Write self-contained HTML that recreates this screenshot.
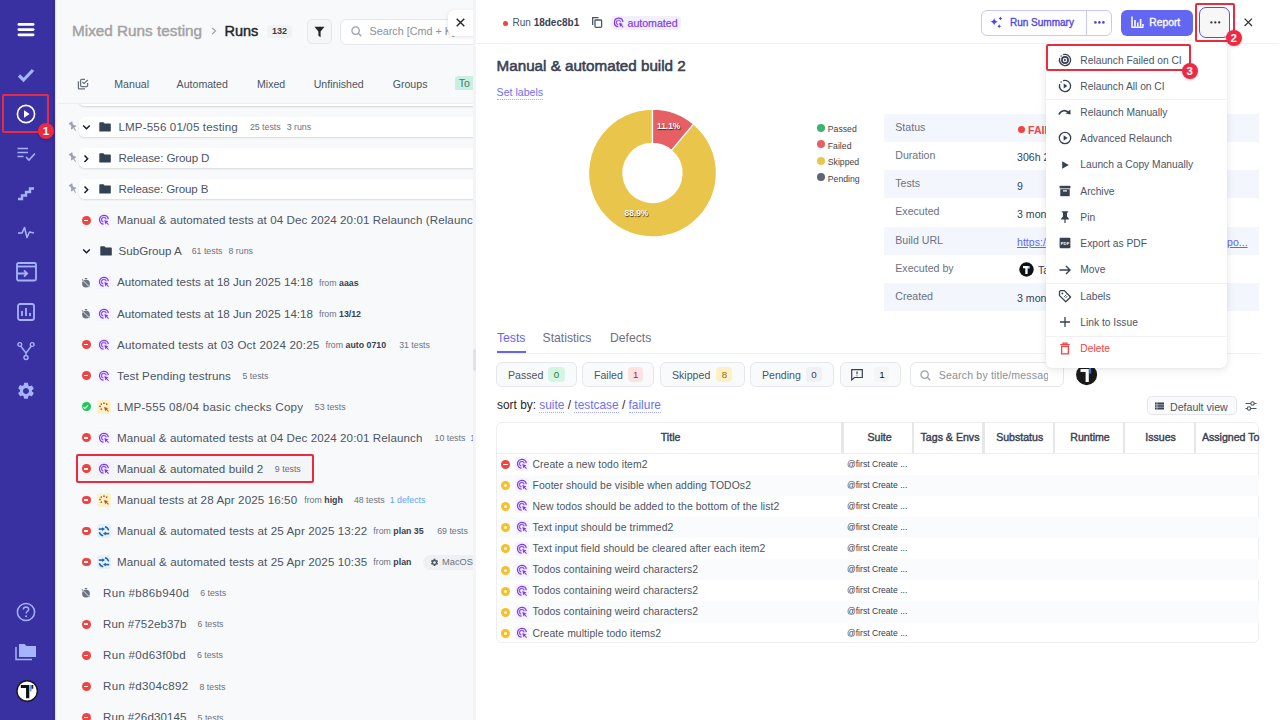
<!DOCTYPE html><html><head><meta charset="utf-8"><title>Runs</title><style>
*{box-sizing:border-box;margin:0;padding:0}
html,body{width:1280px;height:720px;overflow:hidden;background:#f8f9fb;font-family:"Liberation Sans",sans-serif;color:#4b5563;-webkit-font-smoothing:antialiased}
.a{position:absolute}
svg{display:block;overflow:visible}
#side{left:0;top:0;width:54.5px;height:720px;background:#3930a1}
#left{left:55px;top:0;width:418px;height:720px;background:#f8f9fb;overflow:hidden}
#sbar{left:473px;top:0;width:3px;height:720px;background:#f3f4f6}
#right{left:476px;top:0;width:804px;height:720px;background:#fff}
.redbox{position:absolute;border:2.5px solid #ec2a3f;border-radius:2px}
.badge{position:absolute;width:16px;height:16px;border-radius:50%;background:#ee2a42;color:#fff;font-weight:bold;font-size:11.5px;line-height:16.5px;text-align:center;box-shadow:0 1px 3px rgba(0,0,0,.18)}
.row{position:absolute;left:0;width:418px;height:20px;white-space:nowrap}
.card{position:absolute;left:23.7px;width:400px;height:20px;background:#fff;border-radius:5px;box-shadow:0 1px 2px rgba(0,0,0,.13)}
.rt{position:absolute;font-size:11.6px;color:#4b5563;top:3px;line-height:14px;white-space:nowrap}
.meta{font-size:8.8px;color:#6b7280;position:relative;top:-0.8px;letter-spacing:0}
.meta b{color:#374151}
.st{position:absolute;width:8.8px;height:8.8px;border-radius:50%;left:26.9px;top:5.6px}
.st.red{background:#ef4444}
.st.red:after{content:"";position:absolute;left:2.3px;top:3.65px;width:4.2px;height:1.5px;background:#fff}
.st.green{background:#22c55e}
.st.green:after{content:"";position:absolute;left:2.3px;top:1.6px;width:2.2px;height:4px;border:solid #fff;border-width:0 1.4px 1.4px 0;transform:rotate(45deg)}
.ti{position:absolute;left:42.2px;top:3px;width:14px;height:14px;border-radius:3px}
.ti.auto{background:#f6f3fe}
.ti.man{background:#fdf1c9}
.ti.mix{background:#e6f0fb}
.mi{position:absolute;left:0;width:181px;height:26px;white-space:nowrap}
.mt{position:absolute;left:34.5px;top:7px;font-size:10.6px;line-height:12px;color:#4b5563}
.mic{position:absolute;left:12px;top:6.5px;width:14px;height:14px}
.lbl{position:absolute;left:12px;font-size:10.6px;color:#6b7280;line-height:12px}
.val{position:absolute;left:133px;font-size:10.6px;color:#374151;line-height:12px}
.pill{position:absolute;top:362px;height:25px;border:1px solid #e5e7eb;border-radius:6px;background:#f9fafb}
.pt{position:absolute;top:6px;font-size:10.6px;line-height:12px;color:#4b5563}
.pb{position:absolute;top:4px;height:15px;border-radius:4px;font-size:9.8px;line-height:15.5px;text-align:center}
.th{position:absolute;top:431px;font-size:10.6px;color:#374151;-webkit-text-stroke:0.4px #374151;line-height:12px;white-space:nowrap}
.tr{position:absolute;left:497px;width:762px;height:21.14px}
.tt{position:absolute;left:35.5px;top:4px;font-size:10.4px;letter-spacing:0.08px;line-height:13px;color:#4b5563;white-space:nowrap}
.ts{position:absolute;left:350px;top:5px;font-size:8.6px;line-height:11px;color:#374151;white-space:nowrap}
</style></head><body>
<div id="side" class="a">
<div class="a" style="left:53px;top:0;width:1px;height:720px;background:#31279b"></div>
<svg class="a" style="left:17px;top:22px" width="18" height="15"><rect x="0.5" y="1" width="17" height="2.8" rx="1.4" fill="#fff"/><rect x="0.5" y="6.2" width="17" height="2.8" rx="1.4" fill="#fff"/><rect x="0.5" y="11.4" width="17" height="2.8" rx="1.4" fill="#fff"/></svg>
<svg class="a" style="left:17px;top:67px" width="18" height="16"><path d="M2 8.5 L6.5 13 L16 3" stroke="#a5b4fc" stroke-width="3.2" fill="none" stroke-linecap="butt" stroke-linejoin="miter"/></svg>
<svg class="a" style="left:16px;top:104px" width="20" height="20"><circle cx="10" cy="10" r="8.6" stroke="#fff" stroke-width="1.6" fill="none"/><path d="M8 6.3 L13.6 10 L8 13.7 Z" fill="#fff"/></svg>
<svg class="a" style="left:17px;top:147px" width="19" height="15"><path d="M0.5 1.5H11M0.5 5.5H11M0.5 9.5H6.5" stroke="#a5b4fc" stroke-width="1.6"/><path d="M9 10 L12 13 L18 6.5" stroke="#a5b4fc" stroke-width="1.6" fill="none"/></svg>
<svg class="a" style="left:17px;top:186px" width="18" height="15"><path d="M1 13 H5 V9.5 H9 V6 H13 V2.5 H17" stroke="#a5b4fc" stroke-width="2.4" fill="none"/></svg>
<svg class="a" style="left:17px;top:226px" width="18" height="13"><path d="M1 7 H5 L7.5 1.5 L10 11.5 L12.5 6 L17 7" stroke="#a5b4fc" stroke-width="1.6" fill="none" stroke-linejoin="round"/></svg>
<svg class="a" style="left:16px;top:262px" width="21" height="20"><rect x="1" y="1" width="19" height="17.5" rx="1.5" stroke="#a5b4fc" stroke-width="1.8" fill="none"/><path d="M1 4.5H20" stroke="#a5b4fc" stroke-width="1.8"/><path d="M1 11.5 H11 M8 8.3 L11.2 11.5 L8 14.7" stroke="#a5b4fc" stroke-width="1.8" fill="none"/></svg>
<svg class="a" style="left:17px;top:303px" width="18" height="18"><rect x="1" y="1" width="16" height="16" rx="2" stroke="#a5b4fc" stroke-width="1.8" fill="none"/><path d="M5 13V8 M9 13V5 M13 13V10" stroke="#a5b4fc" stroke-width="1.8"/></svg>
<svg class="a" style="left:17px;top:342px" width="18" height="19"><circle cx="2.8" cy="2.5" r="1.9" stroke="#a5b4fc" stroke-width="1.4" fill="none"/><circle cx="15.2" cy="2.5" r="1.9" stroke="#a5b4fc" stroke-width="1.4" fill="none"/><circle cx="9" cy="15.5" r="2" stroke="#a5b4fc" stroke-width="1.4" fill="none"/><path d="M3.8 4.2 L9 11 L14.2 4.2 M9 11 V13.5" stroke="#a5b4fc" stroke-width="1.4" fill="none"/></svg>
<svg class="a" style="left:16px;top:381px" width="20" height="20" viewBox="0 0 24 24"><path fill="#a5b4fc" d="M19.14 12.94c.04-.3.06-.61.06-.94s-.02-.64-.07-.94l2.03-1.58a.49.49 0 0 0 .12-.61l-1.92-3.32a.49.49 0 0 0-.59-.22l-2.39.96c-.5-.38-1.03-.7-1.62-.94l-.36-2.54A.48.48 0 0 0 13.92 2h-3.84c-.24 0-.43.17-.47.41l-.36 2.54c-.59.24-1.13.57-1.62.94l-2.39-.96a.48.48 0 0 0-.59.22L2.74 8.47c-.12.21-.08.47.12.61l2.03 1.58c-.05.3-.09.63-.09.94s.02.64.07.94l-2.03 1.58a.49.49 0 0 0-.12.61l1.92 3.32c.12.22.37.29.59.22l2.39-.96c.5.38 1.03.7 1.62.94l.36 2.54c.05.24.24.41.48.41h3.84c.24 0 .44-.17.47-.41l.36-2.54c.59-.24 1.13-.56 1.62-.94l2.39.96c.22.08.47 0 .59-.22l1.92-3.32c.12-.22.07-.47-.12-.61l-2.01-1.58zM12 15.6c-1.98 0-3.6-1.62-3.6-3.6s1.62-3.6 3.6-3.6 3.6 1.62 3.6 3.6-1.62 3.6-3.6 3.6z"/></svg>
<svg class="a" style="left:16px;top:602px" width="20" height="20"><circle cx="10" cy="10" r="8.6" stroke="#a5b4fc" stroke-width="1.5" fill="none"/><path d="M7.3 7.6 C7.3 5.9 8.5 5 10 5 C11.6 5 12.7 6 12.7 7.4 C12.7 9.2 10.2 9.4 10.2 11.4" stroke="#a5b4fc" stroke-width="1.5" fill="none"/><circle cx="10.1" cy="14.2" r="1" fill="#a5b4fc"/></svg>
<svg class="a" style="left:15px;top:642px" width="22" height="19"><path d="M1 5 V17.5 H17" stroke="#a5b4fc" stroke-width="1.5" fill="none"/><path d="M4 2 H9.5 L11.5 4 H21 V15 H4 Z" fill="#a5b4fc"/></svg>
<svg class="a" style="left:15.5px;top:680px" width="23" height="23"><circle cx="11.15" cy="11" r="10.2" fill="#fff" stroke="#1a1a1a" stroke-width="1.4"/><path d="M4.8 5 H13.3 V18.2 H10.05 V8 H4.8 Z" fill="#111"/><rect x="13.7" y="5" width="1.8" height="6.4" fill="#5b9cf5"/><rect x="15.5" y="5" width="1.8" height="3.8" fill="#222"/></svg>
</div>
<div id="left" class="a">
<div class="a" style="left:17px;top:21.8px;font-size:15.3px;color:#a3a3a3;-webkit-text-stroke:0.45px #a3a3a3;line-height:18px;white-space:nowrap">Mixed Runs testing</div>
<svg class="a" style="left:155.5px;top:27px" width="6" height="8"><path d="M1.2 1 L4.5 4 L1.2 7" stroke="#9ca3af" stroke-width="1.2" fill="none"/></svg>
<div class="a" style="left:169.5px;top:21.8px;font-size:14.5px;color:#262626;-webkit-text-stroke:0.45px #262626;line-height:18px">Runs</div>
<div class="a" style="left:212px;top:25px;width:25px;height:13px;border-radius:3px;background:#f1f2f4;font-size:9px;font-weight:bold;color:#404040;line-height:13px;text-align:center">132</div>
<div class="a" style="left:252px;top:18.5px;width:25px;height:25px;border:1px solid #e5e7eb;border-radius:5px;background:#f6f6f7"></div>
<svg class="a" style="left:259px;top:25.5px" width="11" height="12"><path d="M0.5 0.8 H10.5 L6.6 5.6 V11.2 L4.4 9.8 V5.6 Z" fill="#262626"/></svg>
<div class="a" style="left:285px;top:18.5px;width:150px;height:26px;border:1px solid #e5e7eb;border-radius:6px;background:#fff"></div>
<svg class="a" style="left:295.5px;top:25.5px" width="11" height="11"><circle cx="4.6" cy="4.6" r="3.7" stroke="#9ca3af" stroke-width="1.3" fill="none"/><path d="M7.3 7.3 L10.3 10.3" stroke="#9ca3af" stroke-width="1.3"/></svg>
<div class="a" style="left:314.5px;top:25px;font-size:10.8px;color:#8b9099;line-height:12px;white-space:nowrap">Search [Cmd + K]</div>
<div class="a" style="left:392.5px;top:10px;width:30px;height:26px;background:#fff;border-radius:6px;box-shadow:0 1px 4px rgba(0,0,0,.12)"></div>
<svg class="a" style="left:400.5px;top:18px" width="9" height="9"><path d="M0.7 0.7 L8.3 8.3 M8.3 0.7 L0.7 8.3" stroke="#262626" stroke-width="1.4"/></svg>
<svg class="a" style="left:22px;top:78px" width="12" height="12"><path d="M1.4 3.2 V10.3 Q1.4 10.9 2 10.9 H8" stroke="#6b7280" stroke-width="1.3" fill="none"/><path d="M8 1.4 H4.6 Q3.6 1.4 3.6 2.4 V7.6 Q3.6 8.6 4.6 8.6 H9.6 Q10.6 8.6 10.6 7.6 V5" stroke="#6b7280" stroke-width="1.3" fill="none"/><path d="M5.4 4.3 L7 5.5 L10.8 2" stroke="#6b7280" stroke-width="1.3" fill="none"/></svg>
<div class="a" style="left:59.3px;top:77.5px;font-size:10.6px;color:#4b5563;line-height:12px;white-space:nowrap">Manual</div>
<div class="a" style="left:121.6px;top:77.5px;font-size:10.6px;color:#4b5563;line-height:12px;white-space:nowrap">Automated</div>
<div class="a" style="left:202px;top:77.5px;font-size:10.6px;color:#4b5563;line-height:12px;white-space:nowrap">Mixed</div>
<div class="a" style="left:258.7px;top:77.5px;font-size:10.6px;color:#4b5563;line-height:12px;white-space:nowrap">Unfinished</div>
<div class="a" style="left:337.7px;top:77.5px;font-size:10.6px;color:#4b5563;line-height:12px;white-space:nowrap">Groups</div>
<div class="a" style="left:399.7px;top:76px;width:30px;height:15px;border-radius:3px;background:#c9efe0;font-size:10.6px;color:#3f7f6a;line-height:15px;padding-left:4px">To</div>
<div class="a" style="left:23.7px;top:96px;width:400px;height:10px;background:#fff;border-radius:0 0 5px 5px;box-shadow:0 1px 2px rgba(0,0,0,.15)"></div>
<div class="a" style="left:0;top:90px;width:418px;height:13px;background:#f8f9fb"></div>
<div class="a" style="left:0;top:103px;width:418px;height:1px;background:#eceef1"></div>
<div class="row" style="top:117.10px">
<div class="card"></div>
<svg class="a" style="left:12.5px;top:3.5px" width="10" height="11" viewBox="0 0 10 11"><g transform="rotate(-32 5 5.5)"><path d="M3 0.6 H7 V1.9 H6.3 V4.4 L7.9 6.2 V7.1 H2.1 V6.2 L3.7 4.4 V1.9 H3 Z" fill="#9ca3af"/><path d="M5 7 V10.4" stroke="#9ca3af" stroke-width="1"/></g></svg>
<svg class="a" style="left:27px;top:7px" width="9" height="7"><path d="M1.2 1.5 L4.5 4.7 L7.8 1.5" stroke="#111827" stroke-width="1.45" fill="none"/></svg>
<svg class="a" style="left:44.4px;top:5px" width="12" height="10"><path d="M0.3 1 Q0.3 0.3 1 0.3 H4.5 L5.6 1.5 H11.2 Q11.8 1.5 11.8 2.2 V8.9 Q11.8 9.5 11.1 9.5 H1 Q0.3 9.5 0.3 8.9 Z" fill="#334155"/></svg>
<div class="rt" style="left:63.5px;top:2.5px"><span style="letter-spacing:0.13px">LMP-556 01/05 testing</span><span class="meta" style="margin-left:12px">25 tests</span><span class="meta" style="margin-left:6px">3 runs</span></div>
</div>
<div class="row" style="top:148.17px">
<div class="card"></div>
<svg class="a" style="left:12.5px;top:3.5px" width="10" height="11" viewBox="0 0 10 11"><g transform="rotate(-32 5 5.5)"><path d="M3 0.6 H7 V1.9 H6.3 V4.4 L7.9 6.2 V7.1 H2.1 V6.2 L3.7 4.4 V1.9 H3 Z" fill="#9ca3af"/><path d="M5 7 V10.4" stroke="#9ca3af" stroke-width="1"/></g></svg>
<svg class="a" style="left:28px;top:5.5px" width="7" height="10"><path d="M1.5 1.5 L4.7 4.8 L1.5 8.1" stroke="#111827" stroke-width="1.45" fill="none"/></svg>
<svg class="a" style="left:44.4px;top:5px" width="12" height="10"><path d="M0.3 1 Q0.3 0.3 1 0.3 H4.5 L5.6 1.5 H11.2 Q11.8 1.5 11.8 2.2 V8.9 Q11.8 9.5 11.1 9.5 H1 Q0.3 9.5 0.3 8.9 Z" fill="#334155"/></svg>
<div class="rt" style="left:63.5px;top:2.5px"><span style="letter-spacing:-0.12px">Release: Group D</span></div>
</div>
<div class="row" style="top:179.24px">
<div class="card"></div>
<svg class="a" style="left:12.5px;top:3.5px" width="10" height="11" viewBox="0 0 10 11"><g transform="rotate(-32 5 5.5)"><path d="M3 0.6 H7 V1.9 H6.3 V4.4 L7.9 6.2 V7.1 H2.1 V6.2 L3.7 4.4 V1.9 H3 Z" fill="#9ca3af"/><path d="M5 7 V10.4" stroke="#9ca3af" stroke-width="1"/></g></svg>
<svg class="a" style="left:28px;top:5.5px" width="7" height="10"><path d="M1.5 1.5 L4.7 4.8 L1.5 8.1" stroke="#111827" stroke-width="1.45" fill="none"/></svg>
<svg class="a" style="left:44.4px;top:5px" width="12" height="10"><path d="M0.3 1 Q0.3 0.3 1 0.3 H4.5 L5.6 1.5 H11.2 Q11.8 1.5 11.8 2.2 V8.9 Q11.8 9.5 11.1 9.5 H1 Q0.3 9.5 0.3 8.9 Z" fill="#334155"/></svg>
<div class="rt" style="left:63.5px;top:2.5px"><span style="letter-spacing:-0.15px">Release: Group B</span></div>
</div>
<div class="row" style="top:210.31px">
<div class="st red"></div>
<div class="ti auto"><svg class="a" style="left:0;top:0" width="14" height="14" viewBox="0 0 14 14"><path d="M11.3 6.2 A4.4 4.4 0 1 0 6.6 11.1" stroke="#7c3aed" stroke-width="1.3" fill="none"/><path d="M9.1 6.5 A2.3 2.3 0 1 0 6.5 9" stroke="#7c3aed" stroke-width="1.2" fill="none" opacity="0.85"/><path d="M7.3 7.1 L11.6 8.4 L9.9 9.2 L11.9 11.2 L11.2 11.9 L9.2 9.9 L8.4 11.6 Z" fill="#7c3aed"/></svg></div>
<div class="rt" style="left:62px"><span style="letter-spacing:0.083px">Manual &amp; automated tests at 04 Dec 2024 20:01 Relaunch (Relaunch)</span></div>
</div>
<div class="row" style="top:241.38px">
<svg class="a" style="left:27px;top:7px" width="9" height="7"><path d="M1.2 1.5 L4.5 4.7 L7.8 1.5" stroke="#111827" stroke-width="1.45" fill="none"/></svg>
<svg class="a" style="left:44.6px;top:5px" width="12" height="10"><path d="M0.3 1 Q0.3 0.3 1 0.3 H4.5 L5.6 1.5 H11.2 Q11.8 1.5 11.8 2.2 V8.9 Q11.8 9.5 11.1 9.5 H1 Q0.3 9.5 0.3 8.9 Z" fill="#334155"/></svg>
<div class="rt" style="left:63.5px;top:2.5px"><span style="letter-spacing:0px">SubGroup A</span><span class="meta" style="margin-left:10px">61 tests</span><span class="meta" style="margin-left:6px">8 runs</span></div>
</div>
<div class="row" style="top:272.45px">
<svg class="a" style="left:25.8px;top:5.1px" width="10" height="10" viewBox="0 0 10 10"><circle cx="5" cy="5.6" r="3.9" fill="#6b7280"/><path d="M3.8 0.6 H6.2 M1 1.5 L8.5 9" stroke="#6b7280" stroke-width="1.1"/><path d="M1.3 1.8 L8.3 8.8" stroke="#f8f9fb" stroke-width="0.9"/></svg>
<div class="ti auto"><svg class="a" style="left:0;top:0" width="14" height="14" viewBox="0 0 14 14"><path d="M11.3 6.2 A4.4 4.4 0 1 0 6.6 11.1" stroke="#7c3aed" stroke-width="1.3" fill="none"/><path d="M9.1 6.5 A2.3 2.3 0 1 0 6.5 9" stroke="#7c3aed" stroke-width="1.2" fill="none" opacity="0.85"/><path d="M7.3 7.1 L11.6 8.4 L9.9 9.2 L11.9 11.2 L11.2 11.9 L9.2 9.9 L8.4 11.6 Z" fill="#7c3aed"/></svg></div>
<div class="rt" style="left:62px"><span style="letter-spacing:0px">Automated tests at 18 Jun 2025 14:18</span><span class="meta" style="margin-left:6px">from <b>aaas</b></span></div>
</div>
<div class="row" style="top:303.52px">
<svg class="a" style="left:25.8px;top:5.1px" width="10" height="10" viewBox="0 0 10 10"><circle cx="5" cy="5.6" r="3.9" fill="#6b7280"/><path d="M3.8 0.6 H6.2 M1 1.5 L8.5 9" stroke="#6b7280" stroke-width="1.1"/><path d="M1.3 1.8 L8.3 8.8" stroke="#f8f9fb" stroke-width="0.9"/></svg>
<div class="ti auto"><svg class="a" style="left:0;top:0" width="14" height="14" viewBox="0 0 14 14"><path d="M11.3 6.2 A4.4 4.4 0 1 0 6.6 11.1" stroke="#7c3aed" stroke-width="1.3" fill="none"/><path d="M9.1 6.5 A2.3 2.3 0 1 0 6.5 9" stroke="#7c3aed" stroke-width="1.2" fill="none" opacity="0.85"/><path d="M7.3 7.1 L11.6 8.4 L9.9 9.2 L11.9 11.2 L11.2 11.9 L9.2 9.9 L8.4 11.6 Z" fill="#7c3aed"/></svg></div>
<div class="rt" style="left:62px"><span style="letter-spacing:0px">Automated tests at 18 Jun 2025 14:18</span><span class="meta" style="margin-left:6px">from <b>13/12</b></span></div>
</div>
<div class="row" style="top:334.59px">
<div class="st red"></div>
<div class="ti auto"><svg class="a" style="left:0;top:0" width="14" height="14" viewBox="0 0 14 14"><path d="M11.3 6.2 A4.4 4.4 0 1 0 6.6 11.1" stroke="#7c3aed" stroke-width="1.3" fill="none"/><path d="M9.1 6.5 A2.3 2.3 0 1 0 6.5 9" stroke="#7c3aed" stroke-width="1.2" fill="none" opacity="0.85"/><path d="M7.3 7.1 L11.6 8.4 L9.9 9.2 L11.9 11.2 L11.2 11.9 L9.2 9.9 L8.4 11.6 Z" fill="#7c3aed"/></svg></div>
<div class="rt" style="left:62px"><span style="letter-spacing:0.2px">Automated tests at 03 Oct 2024 20:25</span><span class="meta" style="margin-left:6px">from <b>auto 0710</b></span><span class="meta" style="margin-left:13px">31 tests</span></div>
</div>
<div class="row" style="top:365.66px">
<div class="st red"></div>
<div class="ti auto"><svg class="a" style="left:0;top:0" width="14" height="14" viewBox="0 0 14 14"><path d="M11.3 6.2 A4.4 4.4 0 1 0 6.6 11.1" stroke="#7c3aed" stroke-width="1.3" fill="none"/><path d="M9.1 6.5 A2.3 2.3 0 1 0 6.5 9" stroke="#7c3aed" stroke-width="1.2" fill="none" opacity="0.85"/><path d="M7.3 7.1 L11.6 8.4 L9.9 9.2 L11.9 11.2 L11.2 11.9 L9.2 9.9 L8.4 11.6 Z" fill="#7c3aed"/></svg></div>
<div class="rt" style="left:62px"><span style="letter-spacing:0.12px">Test Pending testruns</span><span class="meta" style="margin-left:11.5px">5 tests</span></div>
</div>
<div class="row" style="top:396.73px">
<div class="st green"></div>
<div class="ti man"><svg class="a" style="left:0;top:0" width="14" height="14" viewBox="0 0 14 14"><circle cx="4.3" cy="4.1" r="0.85" fill="#b5540f"/><circle cx="7" cy="3.2" r="0.85" fill="#b5540f"/><circle cx="9.7" cy="4.1" r="0.85" fill="#b5540f"/><circle cx="3" cy="6.4" r="0.85" fill="#b5540f"/><circle cx="4.3" cy="9.1" r="0.85" fill="#b5540f"/><path d="M7.1 6.9 L11.4 8.2 L9.7 9 L11.8 11.1 L11.1 11.8 L9 9.7 L8.2 11.4 Z" fill="#b5540f"/></svg></div>
<div class="rt" style="left:62px"><span style="letter-spacing:0.23px">LMP-555 08/04 basic checks Copy</span><span class="meta" style="margin-left:11.5px">53 tests</span></div>
</div>
<div class="row" style="top:427.80px">
<div class="st red"></div>
<div class="ti auto"><svg class="a" style="left:0;top:0" width="14" height="14" viewBox="0 0 14 14"><path d="M11.3 6.2 A4.4 4.4 0 1 0 6.6 11.1" stroke="#7c3aed" stroke-width="1.3" fill="none"/><path d="M9.1 6.5 A2.3 2.3 0 1 0 6.5 9" stroke="#7c3aed" stroke-width="1.2" fill="none" opacity="0.85"/><path d="M7.3 7.1 L11.6 8.4 L9.9 9.2 L11.9 11.2 L11.2 11.9 L9.2 9.9 L8.4 11.6 Z" fill="#7c3aed"/></svg></div>
<div class="rt" style="left:62px"><span style="letter-spacing:0.083px">Manual &amp; automated tests at 04 Dec 2024 20:01 Relaunch</span><span class="meta" style="margin-left:12px">10 tests</span><span class="meta" style="margin-left:5px;color:#3b82f6">1</span></div>
</div>
<div class="row" style="top:458.87px">
<div class="st red"></div>
<div class="ti auto"><svg class="a" style="left:0;top:0" width="14" height="14" viewBox="0 0 14 14"><path d="M11.3 6.2 A4.4 4.4 0 1 0 6.6 11.1" stroke="#7c3aed" stroke-width="1.3" fill="none"/><path d="M9.1 6.5 A2.3 2.3 0 1 0 6.5 9" stroke="#7c3aed" stroke-width="1.2" fill="none" opacity="0.85"/><path d="M7.3 7.1 L11.6 8.4 L9.9 9.2 L11.9 11.2 L11.2 11.9 L9.2 9.9 L8.4 11.6 Z" fill="#7c3aed"/></svg></div>
<div class="rt" style="left:62px"><span style="letter-spacing:0.076px">Manual &amp; automated build 2</span><span class="meta" style="margin-left:11.5px">9 tests</span></div>
</div>
<div class="row" style="top:489.94px">
<div class="st red"></div>
<div class="ti man"><svg class="a" style="left:0;top:0" width="14" height="14" viewBox="0 0 14 14"><circle cx="4.3" cy="4.1" r="0.85" fill="#b5540f"/><circle cx="7" cy="3.2" r="0.85" fill="#b5540f"/><circle cx="9.7" cy="4.1" r="0.85" fill="#b5540f"/><circle cx="3" cy="6.4" r="0.85" fill="#b5540f"/><circle cx="4.3" cy="9.1" r="0.85" fill="#b5540f"/><path d="M7.1 6.9 L11.4 8.2 L9.7 9 L11.8 11.1 L11.1 11.8 L9 9.7 L8.2 11.4 Z" fill="#b5540f"/></svg></div>
<div class="rt" style="left:62px"><span style="letter-spacing:0.11px">Manual tests at 28 Apr 2025 16:50</span><span class="meta" style="margin-left:7px">from <b>high</b></span><span class="meta" style="margin-left:11px">48 tests</span><span class="meta" style="margin-left:5px;color:#60a5fa">1 defects</span></div>
</div>
<div class="row" style="top:521.01px">
<div class="st red"></div>
<div class="ti mix"><svg class="a" style="left:0;top:0" width="14" height="14" viewBox="0 0 14 14"><path d="M1.8 5.1 H6" stroke="#1d64b3" stroke-width="1.6"/><path d="M8 5.1 L5.2 3.3 V6.9 Z" fill="#1d64b3"/><path d="M8 2.8 Q10.9 3.5 11.6 6.4" stroke="#1d64b3" stroke-width="1.5" fill="none"/><path d="M12.2 9.6 H8" stroke="#1d64b3" stroke-width="1.6"/><path d="M6 9.6 L8.8 7.8 V11.4 Z" fill="#1d64b3"/><path d="M2.4 8.2 Q3.1 11.1 6.2 11.7" stroke="#1d64b3" stroke-width="1.5" fill="none"/></svg></div>
<div class="rt" style="left:62px"><span style="letter-spacing:0.105px">Manual &amp; automated tests at 25 Apr 2025 13:22</span><span class="meta" style="margin-left:6px">from <b>plan 35</b></span><span class="meta" style="margin-left:13.5px">69 tests</span></div>
</div>
<div class="row" style="top:552.08px">
<div class="st red"></div>
<div class="ti mix"><svg class="a" style="left:0;top:0" width="14" height="14" viewBox="0 0 14 14"><path d="M1.8 5.1 H6" stroke="#1d64b3" stroke-width="1.6"/><path d="M8 5.1 L5.2 3.3 V6.9 Z" fill="#1d64b3"/><path d="M8 2.8 Q10.9 3.5 11.6 6.4" stroke="#1d64b3" stroke-width="1.5" fill="none"/><path d="M12.2 9.6 H8" stroke="#1d64b3" stroke-width="1.6"/><path d="M6 9.6 L8.8 7.8 V11.4 Z" fill="#1d64b3"/><path d="M2.4 8.2 Q3.1 11.1 6.2 11.7" stroke="#1d64b3" stroke-width="1.5" fill="none"/></svg></div>
<div class="rt" style="left:62px"><span style="letter-spacing:0.105px">Manual &amp; automated tests at 25 Apr 2025 10:35</span><span class="meta" style="margin-left:6px">from <b>plan</b></span></div>
<div class="a" style="left:368px;top:2.5px;width:60px;height:15px;border-radius:8px;background:#eef0f3"><svg class="a" style="left:6.5px;top:3px" width="9" height="9" viewBox="0 0 24 24"><path fill="#4b5563" d="M19.14 12.94c.04-.3.06-.61.06-.94s-.02-.64-.07-.94l2.03-1.58a.49.49 0 0 0 .12-.61l-1.92-3.32a.49.49 0 0 0-.59-.22l-2.39.96c-.5-.38-1.03-.7-1.62-.94l-.36-2.54A.48.48 0 0 0 13.92 2h-3.84c-.24 0-.43.17-.47.41l-.36 2.54c-.59.24-1.13.57-1.62.94l-2.39-.96a.48.48 0 0 0-.59.22L2.74 8.47c-.12.21-.08.47.12.61l2.03 1.58c-.05.3-.09.63-.09.94s.02.64.07.94l-2.03 1.58a.49.49 0 0 0-.12.61l1.92 3.32c.12.22.37.29.59.22l2.39-.96c.5.38 1.03.7 1.62.94l.36 2.54c.05.24.24.41.48.41h3.84c.24 0 .44-.17.47-.41l.36-2.54c.59-.24 1.13-.56 1.62-.94l2.39.96c.22.08.47 0 .59-.22l1.92-3.32c.12-.22.07-.47-.12-.61l-2.01-1.58zM12 15.6c-1.98 0-3.6-1.62-3.6-3.6s1.62-3.6 3.6-3.6 3.6 1.62 3.6 3.6-1.62 3.6-3.6 3.6z"/></svg><span class="a" style="left:19px;top:2px;font-size:9.3px;color:#6b7280;line-height:11px">MacOS</span></div>
</div>
<div class="row" style="top:583.15px">
<svg class="a" style="left:25.8px;top:5.1px" width="10" height="10" viewBox="0 0 10 10"><circle cx="5" cy="5.6" r="3.9" fill="#6b7280"/><path d="M3.8 0.6 H6.2 M1 1.5 L8.5 9" stroke="#6b7280" stroke-width="1.1"/><path d="M1.3 1.8 L8.3 8.8" stroke="#f8f9fb" stroke-width="0.9"/></svg>
<div class="rt" style="left:48px"><span style="letter-spacing:0.28px">Run #b86b940d</span><span class="meta" style="margin-left:11px">6 tests</span></div>
</div>
<div class="row" style="top:614.22px">
<div class="st red"></div>
<div class="rt" style="left:48px"><span style="letter-spacing:0.08px">Run #752eb37b</span><span class="meta" style="margin-left:11px">6 tests</span></div>
</div>
<div class="row" style="top:645.29px">
<div class="st red"></div>
<div class="rt" style="left:48px"><span style="letter-spacing:0.28px">Run #0d63f0bd</span><span class="meta" style="margin-left:11px">6 tests</span></div>
</div>
<div class="row" style="top:676.36px">
<div class="st red"></div>
<div class="rt" style="left:48px"><span style="letter-spacing:0.28px">Run #d304c892</span><span class="meta" style="margin-left:11px">8 tests</span></div>
</div>
<div class="row" style="top:707.43px">
<div class="st red"></div>
<div class="rt" style="left:48px"><span style="letter-spacing:0.08px">Run #26d30145</span><span class="meta" style="margin-left:11px">5 tests</span></div>
</div>
<div class="redbox" style="left:20.700000000000003px;top:454px;width:238.3px;height:29px;background:rgba(0,0,0,0.015)"></div>
</div>
<div class="a" style="left:54.5px;top:0;width:3px;height:720px;background:linear-gradient(90deg,#d6d4ee,#f6f6fb 50%,#fcfdfd)"></div>
<div id="sbar" class="a"><div class="a" style="left:0.3px;top:349px;width:2.6px;height:22px;border-radius:2px;background:#e1e3e8"></div></div>
<div class="redbox" style="left:2px;top:94px;width:46.5px;height:38.5px"></div>
<div class="badge" style="left:38px;top:123px">1</div>
<div id="right" class="a">
<div class="a" style="left:0;top:43px;width:803px;height:1px;background:#f0f1f3"></div>
<div class="a" style="left:26.5px;top:20.5px;width:5px;height:5px;border-radius:50%;background:#ef4444"></div>
<div class="a" style="left:36.5px;top:17px;font-size:10px;line-height:12px;color:#4b5563;white-space:nowrap">Run <b style="color:#374151">18dec8b1</b></div>
<svg class="a" style="left:115.5px;top:17px" width="11" height="11"><path d="M0.7 8 V0.7 H6.5" stroke="#4b5563" stroke-width="1.3" fill="none"/><rect x="3" y="3" width="6.6" height="7.4" rx="0.8" stroke="#4b5563" stroke-width="1.3" fill="none"/></svg>
<div class="a" style="left:135px;top:16px;width:70px;height:14px;border-radius:4px;background:#f3effe"></div>
<div class="a" style="left:136px;top:16px;width:13px;height:13px"><svg class="a" style="left:0;top:0" width="13.5" height="13.5" viewBox="0 0 14 14"><path d="M11.3 6.2 A4.4 4.4 0 1 0 6.6 11.1" stroke="#7c3aed" stroke-width="1.3" fill="none"/><path d="M9.1 6.5 A2.3 2.3 0 1 0 6.5 9" stroke="#7c3aed" stroke-width="1.2" fill="none" opacity="0.85"/><path d="M7.3 7.1 L11.6 8.4 L9.9 9.2 L11.9 11.2 L11.2 11.9 L9.2 9.9 L8.4 11.6 Z" fill="#7c3aed"/></svg></div>
<div class="a" style="left:151.5px;top:16.5px;font-size:10.6px;line-height:12px;color:#7c3aed;-webkit-text-stroke:0.2px #7c3aed;white-space:nowrap">automated</div>
<div class="a" style="left:505.20000000000005px;top:9.8px;width:131.3px;height:25.8px;border:1px solid #c7c8f5;border-radius:6px;background:#fff"></div>
<div class="a" style="left:610px;top:10px;width:1px;height:25.4px;background:#c7c8f5"></div>
<svg class="a" style="left:514px;top:14px" width="14" height="15"><path d="M4.2 4.1 Q4.76 7.24 7.9 7.8 Q4.76 8.36 4.2 11.5 Q3.64 8.36 0.5 7.8 Q3.64 7.24 4.2 4.1 ZM10.45 2.55 Q10.799999999999999 4.15 12.399999999999999 4.5 Q10.799999999999999 4.85 10.45 6.45 Q10.1 4.85 8.5 4.5 Q10.1 4.15 10.45 2.55 ZM9.2 10.350000000000001 Q9.549999999999999 11.950000000000001 11.149999999999999 12.3 Q9.549999999999999 12.65 9.2 14.25 Q8.85 12.65 7.249999999999999 12.3 Q8.85 11.950000000000001 9.2 10.350000000000001 Z" fill="#4f46e5"/></svg>
<div class="a" style="left:534px;top:16.8px;font-size:10.0px;line-height:12px;color:#4f46e5;-webkit-text-stroke:0.35px #4f46e5;white-space:nowrap">Run Summary</div>
<svg class="a" style="left:618px;top:21px" width="11" height="3"><circle cx="1.4" cy="1.4" r="1.3" fill="#4f46e5"/><circle cx="5.4" cy="1.4" r="1.3" fill="#4f46e5"/><circle cx="9.4" cy="1.4" r="1.3" fill="#4f46e5"/></svg>
<div class="a" style="left:644.5px;top:9.8px;width:72px;height:25.8px;border-radius:6px;background:#6366f1"></div>
<svg class="a" style="left:654.5px;top:16px" width="13" height="12"><path d="M1 0.5 V11.3 H12.5" stroke="#fff" stroke-width="1.5" fill="none"/><path d="M4 10.5V4 M6.8 10.5V6.5 M9.6 10.5V3 M12 10.5V8" stroke="#fff" stroke-width="1.6"/></svg>
<div class="a" style="left:673.3px;top:16.8px;font-size:10.3px;line-height:12px;color:#fff;-webkit-text-stroke:0.35px #fff;white-space:nowrap">Report</div>
<div class="a" style="left:722.5999999999999px;top:7px;width:31px;height:31px;border:1.8px solid #5550dc;border-radius:7px;background:#f7f7f8"></div>
<svg class="a" style="left:733.5px;top:21px" width="11" height="3"><circle cx="1.4" cy="1.4" r="1.15" fill="#333"/><circle cx="5.3" cy="1.4" r="1.15" fill="#333"/><circle cx="9.2" cy="1.4" r="1.15" fill="#333"/></svg>
<svg class="a" style="left:767.8px;top:18.3px" width="9" height="9"><path d="M0.6 0.6 L8 8 M8 0.6 L0.6 8" stroke="#333" stroke-width="1.25"/></svg>
<div class="a" style="left:20.600000000000023px;top:57.3px;font-size:15.2px;line-height:17px;color:#374151;-webkit-text-stroke:0.55px #374151;white-space:nowrap">Manual &amp; automated build 2</div>
<div class="a" style="left:20.600000000000023px;top:86px;font-size:10.6px;line-height:12px;color:#6d70ef;border-bottom:1px dotted #a5a8f5;padding-bottom:1px;white-space:nowrap">Set labels</div>
<svg class="a" style="left:0;top:0" width="803" height="320"><path d="M217.60 123.94 A64 64 0 1 1 176.50 109.00 L176.50 143.50 A29.5 29.5 0 1 0 195.45 150.39 Z" fill="#e9c54b" stroke="#fff" stroke-width="1.3"/><path d="M176.50 109.00 A64 64 0 0 1 217.60 123.94 L195.45 150.39 A29.5 29.5 0 0 0 176.50 143.50 Z" fill="#e55f64" stroke="#fff" stroke-width="1.3"/></svg>
<div class="a" style="left:181px;top:121.8px;font-size:8.4px;line-height:9px;color:#fff;font-weight:bold;text-shadow:0.6px 0.8px 1px rgba(0,0,0,.7)">11.1%</div>
<div class="a" style="left:148.5px;top:209.3px;font-size:8.4px;line-height:9px;color:#fff;font-weight:bold;text-shadow:0.6px 0.8px 1px rgba(0,0,0,.7)">88.9%</div>
<div class="a" style="left:341px;top:123.7px;width:8px;height:8px;border-radius:50%;background:#3cb371"></div>
<div class="a" style="left:351.79999999999995px;top:124.2px;font-size:8.7px;line-height:11px;color:#454545">Passed</div>
<div class="a" style="left:341px;top:140.2px;width:8px;height:8px;border-radius:50%;background:#e55f64"></div>
<div class="a" style="left:351.79999999999995px;top:140.7px;font-size:8.7px;line-height:11px;color:#454545">Failed</div>
<div class="a" style="left:341px;top:156.7px;width:8px;height:8px;border-radius:50%;background:#e8c54e"></div>
<div class="a" style="left:351.79999999999995px;top:157.2px;font-size:8.7px;line-height:11px;color:#454545">Skipped</div>
<div class="a" style="left:341px;top:173.2px;width:8px;height:8px;border-radius:50%;background:#5f6673"></div>
<div class="a" style="left:351.79999999999995px;top:173.7px;font-size:8.7px;line-height:11px;color:#454545">Pending</div>
<div class="a" style="left:407.79999999999995px;top:113.7px;width:375.5px;height:28.2px;background:#f3f6fd"></div>
<div class="lbl" style="left:419.29999999999995px;top:120.7px">Status</div>
<div class="a" style="left:407.79999999999995px;top:141.9px;width:375.5px;height:28.2px;background:#fff"></div>
<div class="lbl" style="left:419.29999999999995px;top:148.9px">Duration</div>
<div class="a" style="left:407.79999999999995px;top:170.1px;width:375.5px;height:28.2px;background:#f3f6fd"></div>
<div class="lbl" style="left:419.29999999999995px;top:177.1px">Tests</div>
<div class="a" style="left:407.79999999999995px;top:198.3px;width:375.5px;height:28.2px;background:#fff"></div>
<div class="lbl" style="left:419.29999999999995px;top:205.3px">Executed</div>
<div class="a" style="left:407.79999999999995px;top:226.5px;width:375.5px;height:28.2px;background:#f3f6fd"></div>
<div class="lbl" style="left:419.29999999999995px;top:233.5px">Build URL</div>
<div class="a" style="left:407.79999999999995px;top:254.7px;width:375.5px;height:28.2px;background:#fff"></div>
<div class="lbl" style="left:419.29999999999995px;top:261.7px">Executed by</div>
<div class="a" style="left:407.79999999999995px;top:282.9px;width:375.5px;height:28.2px;background:#f3f6fd"></div>
<div class="lbl" style="left:419.29999999999995px;top:289.9px">Created</div>
<div class="val" style="left:541px;top:151.4px">306h 2</div>
<div class="val" style="left:541px;top:179.6px">9</div>
<div class="val" style="left:541px;top:207.8px">3 mon</div>
<div class="val" style="left:541px;top:292.4px">3 mon</div>
<div class="a" style="left:541.8px;top:126.2px;width:7px;height:7px;border-radius:50%;background:#ef4444"></div>
<div class="a" style="left:552px;top:123.7px;font-size:10.6px;line-height:12px;font-weight:bold;color:#ef4444">FAIL</div>
<div class="a" style="left:541px;top:236.0px;font-size:10.6px;line-height:12px;color:#6366f1;text-decoration:underline">https:/</div>
<div class="a" style="left:751px;top:236.0px;font-size:10.6px;line-height:12px;color:#6366f1;text-decoration:underline">po...</div>
<svg class="a" style="left:542.5px;top:261.7px" width="15" height="15"><circle cx="7.5" cy="7.5" r="7.2" fill="#111"/><path d="M4 4 H10.5 V6.3 H8.6 V12 H6.3 V6.3 H4 Z" fill="#fff"/><rect x="9.5" y="4" width="0.9" height="3" fill="#60a5fa"/></svg>
<div class="val" style="left:562px;top:264.2px">Ta</div>
<div class="a" style="left:21px;top:331px;font-size:12.2px;line-height:14px;color:#6366f1">Tests</div>
<div class="a" style="left:66.5px;top:331px;font-size:12.2px;line-height:14px;color:#6b7280">Statistics</div>
<div class="a" style="left:134px;top:331px;font-size:12.2px;line-height:14px;color:#6b7280">Defects</div>
<div class="a" style="left:21px;top:352.5px;width:765px;height:1px;background:#eef0f3"></div>
<div class="a" style="left:21px;top:351.3px;width:29px;height:2px;background:#6366f1"></div>
<div class="pill" style="left:20.30000000000001px;width:80.6px"><div class="pt" style="left:10.7px">Passed</div><div class="pb" style="left:50.7px;width:17px;background:#d5f5e3;color:#15803d">0</div></div>
<div class="pill" style="left:106.20000000000005px;width:72.2px"><div class="pt" style="left:10.8px">Failed</div><div class="pb" style="left:45.2px;width:14.6px;background:#fde2e2;color:#b91c1c">1</div></div>
<div class="pill" style="left:184.29999999999995px;width:84.4px"><div class="pt" style="left:10.7px">Skipped</div><div class="pb" style="left:55.2px;width:16px;background:#fdf0c4;color:#a16207">8</div></div>
<div class="pill" style="left:274px;width:84px"><div class="pt" style="left:11.0px">Pending</div><div class="pb" style="left:55.0px;width:16px;background:#f0f1f3;color:#374151">0</div></div>
<div class="pill" style="left:364px;width:61px"><svg class="a" style="left:9.5px;top:5.5px" width="12" height="12"><path d="M0.7 0.7 H11.3 V8.5 H3.5 L0.7 11 Z" stroke="#374151" stroke-width="1.2" fill="none"/><path d="M6 2.5 V5.3 M6 6.4 V7.3" stroke="#374151" stroke-width="1.2"/></svg><div class="pb" style="left:33.4px;width:15px;background:#f4f5f7;color:#111">1</div></div>
<div class="a" style="left:433.79999999999995px;top:362px;width:154.6px;height:25px;border:1px solid #e5e7eb;border-radius:6px;background:#fff;overflow:hidden"><svg class="a" style="left:9.5px;top:6.5px" width="11" height="11"><circle cx="4.6" cy="4.6" r="3.7" stroke="#9ca3af" stroke-width="1.3" fill="none"/><path d="M7.3 7.3 L10.3 10.3" stroke="#9ca3af" stroke-width="1.3"/></svg><div class="a" style="left:28px;top:6px;width:109px;overflow:hidden;font-size:10.6px;line-height:12px;color:#8b9099;white-space:nowrap;letter-spacing:0.15px">Search by title/message</div></div>
<svg class="a" style="left:600px;top:364px" width="22" height="22"><circle cx="10.6" cy="10.7" r="10.5" fill="#1a1a1a"/><path d="M4.5 5 H12.8 V18 H9.6 V8 H4.5 Z" fill="#fff"/><rect x="13.2" y="3" width="1.7" height="6.6" fill="#3b82f6"/></svg>
<div class="a" style="left:21px;top:399px;font-size:11.9px;line-height:13px;color:#262626;white-space:nowrap">sort by: <span style="color:#6d70ef;border-bottom:1px dotted #a5a8f5">suite</span> / <span style="color:#6d70ef;border-bottom:1px dotted #a5a8f5">testcase</span> / <span style="color:#6d70ef;border-bottom:1px dotted #a5a8f5">failure</span></div>
<div class="a" style="left:670.9000000000001px;top:396.4px;width:90px;height:19px;border:1px solid #e5e7eb;border-radius:5px;background:#f9fafb"></div>
<svg class="a" style="left:679px;top:402px" width="9" height="8"><rect x="0" y="0.5" width="9" height="7" fill="#374151"/><path d="M0 2.8H9M0 5.2H9M2 0.5V7.5" stroke="#f9fafb" stroke-width="0.6"/></svg>
<div class="a" style="left:694px;top:400.5px;font-size:10.6px;line-height:12px;color:#4b5563;white-space:nowrap">Default view</div>
<svg class="a" style="left:768.5px;top:401px" width="12" height="10"><path d="M0.5 2.5 H11.5 M0.5 7.5 H11.5" stroke="#4b5563" stroke-width="1.1"/><circle cx="7.5" cy="2.5" r="1.7" fill="#fff" stroke="#4b5563" stroke-width="1.1"/><circle cx="4" cy="7.5" r="1.7" fill="#fff" stroke="#4b5563" stroke-width="1.1"/></svg>
<div class="a" style="left:20.30000000000001px;top:421.5px;width:763px;height:221px;border:1px solid #eceef1;border-radius:6px;background:#fff"></div>
<div class="a" style="left:21px;top:452.5px;width:762px;height:1px;background:#eceef1"></div>
<div class="a" style="left:365.3px;top:422px;width:2.5px;height:30.5px;background:#e5e7eb"></div>
<div class="a" style="left:435.6px;top:422px;width:2.5px;height:30.5px;background:#e5e7eb"></div>
<div class="a" style="left:506.4px;top:422px;width:2.5px;height:30.5px;background:#e5e7eb"></div>
<div class="a" style="left:576.8px;top:422px;width:2.5px;height:30.5px;background:#e5e7eb"></div>
<div class="a" style="left:646.6px;top:422px;width:2.5px;height:30.5px;background:#e5e7eb"></div>
<div class="a" style="left:717.8px;top:422px;width:2.5px;height:30.5px;background:#e5e7eb"></div>
<div class="th" style="left:144.6px;width:100px;text-align:center">Title</div>
<div class="th" style="left:353.5px;width:100px;text-align:center">Suite</div>
<div class="th" style="left:424.0px;width:100px;text-align:center">Tags &amp; Envs</div>
<div class="th" style="left:493.7px;width:100px;text-align:center">Substatus</div>
<div class="th" style="left:564.0px;width:100px;text-align:center">Runtime</div>
<div class="th" style="left:634.6px;width:100px;text-align:center">Issues</div>
<div class="th" style="left:725.9000000000001px;width:58px;overflow:hidden">Assigned To</div>
<div class="tr" style="left:21px;top:453.50px;background:transparent"><div class="a" style="left:3.6px;top:6.4px;width:9px;height:9px;border-radius:50%;background:#ef4444"><div class="a" style="left:2px;top:3.7px;width:5px;height:1.6px;background:#fff"></div></div><div class="ti auto" style="left:18px;top:3.5px"><svg class="a" style="left:0;top:0" width="14" height="14" viewBox="0 0 14 14"><path d="M11.3 6.2 A4.4 4.4 0 1 0 6.6 11.1" stroke="#7c3aed" stroke-width="1.3" fill="none"/><path d="M9.1 6.5 A2.3 2.3 0 1 0 6.5 9" stroke="#7c3aed" stroke-width="1.2" fill="none" opacity="0.85"/><path d="M7.3 7.1 L11.6 8.4 L9.9 9.2 L11.9 11.2 L11.2 11.9 L9.2 9.9 L8.4 11.6 Z" fill="#7c3aed"/></svg></div><div class="tt">Create a new todo item2</div><div class="ts">@first Create ...</div></div>
<div class="tr" style="left:21px;top:474.64px;background:#fafbfc"><div class="a" style="left:3.6px;top:6.4px;width:9px;height:9px;border-radius:50%;background:#fbbf24"><div class="a" style="left:3px;top:3px;width:3px;height:3px;border-radius:50%;background:#fff"></div></div><div class="ti auto" style="left:18px;top:3.5px"><svg class="a" style="left:0;top:0" width="14" height="14" viewBox="0 0 14 14"><path d="M11.3 6.2 A4.4 4.4 0 1 0 6.6 11.1" stroke="#7c3aed" stroke-width="1.3" fill="none"/><path d="M9.1 6.5 A2.3 2.3 0 1 0 6.5 9" stroke="#7c3aed" stroke-width="1.2" fill="none" opacity="0.85"/><path d="M7.3 7.1 L11.6 8.4 L9.9 9.2 L11.9 11.2 L11.2 11.9 L9.2 9.9 L8.4 11.6 Z" fill="#7c3aed"/></svg></div><div class="tt">Footer should be visible when adding TODOs2</div><div class="ts">@first Create ...</div></div>
<div class="tr" style="left:21px;top:495.78px;background:transparent"><div class="a" style="left:3.6px;top:6.4px;width:9px;height:9px;border-radius:50%;background:#fbbf24"><div class="a" style="left:3px;top:3px;width:3px;height:3px;border-radius:50%;background:#fff"></div></div><div class="ti auto" style="left:18px;top:3.5px"><svg class="a" style="left:0;top:0" width="14" height="14" viewBox="0 0 14 14"><path d="M11.3 6.2 A4.4 4.4 0 1 0 6.6 11.1" stroke="#7c3aed" stroke-width="1.3" fill="none"/><path d="M9.1 6.5 A2.3 2.3 0 1 0 6.5 9" stroke="#7c3aed" stroke-width="1.2" fill="none" opacity="0.85"/><path d="M7.3 7.1 L11.6 8.4 L9.9 9.2 L11.9 11.2 L11.2 11.9 L9.2 9.9 L8.4 11.6 Z" fill="#7c3aed"/></svg></div><div class="tt">New todos should be added to the bottom of the list2</div><div class="ts">@first Create ...</div></div>
<div class="tr" style="left:21px;top:516.92px;background:#fafbfc"><div class="a" style="left:3.6px;top:6.4px;width:9px;height:9px;border-radius:50%;background:#fbbf24"><div class="a" style="left:3px;top:3px;width:3px;height:3px;border-radius:50%;background:#fff"></div></div><div class="ti auto" style="left:18px;top:3.5px"><svg class="a" style="left:0;top:0" width="14" height="14" viewBox="0 0 14 14"><path d="M11.3 6.2 A4.4 4.4 0 1 0 6.6 11.1" stroke="#7c3aed" stroke-width="1.3" fill="none"/><path d="M9.1 6.5 A2.3 2.3 0 1 0 6.5 9" stroke="#7c3aed" stroke-width="1.2" fill="none" opacity="0.85"/><path d="M7.3 7.1 L11.6 8.4 L9.9 9.2 L11.9 11.2 L11.2 11.9 L9.2 9.9 L8.4 11.6 Z" fill="#7c3aed"/></svg></div><div class="tt">Text input should be trimmed2</div><div class="ts">@first Create ...</div></div>
<div class="tr" style="left:21px;top:538.06px;background:transparent"><div class="a" style="left:3.6px;top:6.4px;width:9px;height:9px;border-radius:50%;background:#fbbf24"><div class="a" style="left:3px;top:3px;width:3px;height:3px;border-radius:50%;background:#fff"></div></div><div class="ti auto" style="left:18px;top:3.5px"><svg class="a" style="left:0;top:0" width="14" height="14" viewBox="0 0 14 14"><path d="M11.3 6.2 A4.4 4.4 0 1 0 6.6 11.1" stroke="#7c3aed" stroke-width="1.3" fill="none"/><path d="M9.1 6.5 A2.3 2.3 0 1 0 6.5 9" stroke="#7c3aed" stroke-width="1.2" fill="none" opacity="0.85"/><path d="M7.3 7.1 L11.6 8.4 L9.9 9.2 L11.9 11.2 L11.2 11.9 L9.2 9.9 L8.4 11.6 Z" fill="#7c3aed"/></svg></div><div class="tt">Text input field should be cleared after each item2</div><div class="ts">@first Create ...</div></div>
<div class="tr" style="left:21px;top:559.20px;background:#fafbfc"><div class="a" style="left:3.6px;top:6.4px;width:9px;height:9px;border-radius:50%;background:#fbbf24"><div class="a" style="left:3px;top:3px;width:3px;height:3px;border-radius:50%;background:#fff"></div></div><div class="ti auto" style="left:18px;top:3.5px"><svg class="a" style="left:0;top:0" width="14" height="14" viewBox="0 0 14 14"><path d="M11.3 6.2 A4.4 4.4 0 1 0 6.6 11.1" stroke="#7c3aed" stroke-width="1.3" fill="none"/><path d="M9.1 6.5 A2.3 2.3 0 1 0 6.5 9" stroke="#7c3aed" stroke-width="1.2" fill="none" opacity="0.85"/><path d="M7.3 7.1 L11.6 8.4 L9.9 9.2 L11.9 11.2 L11.2 11.9 L9.2 9.9 L8.4 11.6 Z" fill="#7c3aed"/></svg></div><div class="tt">Todos containing weird characters2</div><div class="ts">@first Create ...</div></div>
<div class="tr" style="left:21px;top:580.34px;background:transparent"><div class="a" style="left:3.6px;top:6.4px;width:9px;height:9px;border-radius:50%;background:#fbbf24"><div class="a" style="left:3px;top:3px;width:3px;height:3px;border-radius:50%;background:#fff"></div></div><div class="ti auto" style="left:18px;top:3.5px"><svg class="a" style="left:0;top:0" width="14" height="14" viewBox="0 0 14 14"><path d="M11.3 6.2 A4.4 4.4 0 1 0 6.6 11.1" stroke="#7c3aed" stroke-width="1.3" fill="none"/><path d="M9.1 6.5 A2.3 2.3 0 1 0 6.5 9" stroke="#7c3aed" stroke-width="1.2" fill="none" opacity="0.85"/><path d="M7.3 7.1 L11.6 8.4 L9.9 9.2 L11.9 11.2 L11.2 11.9 L9.2 9.9 L8.4 11.6 Z" fill="#7c3aed"/></svg></div><div class="tt">Todos containing weird characters2</div><div class="ts">@first Create ...</div></div>
<div class="tr" style="left:21px;top:601.48px;background:#fafbfc"><div class="a" style="left:3.6px;top:6.4px;width:9px;height:9px;border-radius:50%;background:#fbbf24"><div class="a" style="left:3px;top:3px;width:3px;height:3px;border-radius:50%;background:#fff"></div></div><div class="ti auto" style="left:18px;top:3.5px"><svg class="a" style="left:0;top:0" width="14" height="14" viewBox="0 0 14 14"><path d="M11.3 6.2 A4.4 4.4 0 1 0 6.6 11.1" stroke="#7c3aed" stroke-width="1.3" fill="none"/><path d="M9.1 6.5 A2.3 2.3 0 1 0 6.5 9" stroke="#7c3aed" stroke-width="1.2" fill="none" opacity="0.85"/><path d="M7.3 7.1 L11.6 8.4 L9.9 9.2 L11.9 11.2 L11.2 11.9 L9.2 9.9 L8.4 11.6 Z" fill="#7c3aed"/></svg></div><div class="tt">Todos containing weird characters2</div><div class="ts">@first Create ...</div></div>
<div class="tr" style="left:21px;top:622.62px;background:transparent"><div class="a" style="left:3.6px;top:6.4px;width:9px;height:9px;border-radius:50%;background:#fbbf24"><div class="a" style="left:3px;top:3px;width:3px;height:3px;border-radius:50%;background:#fff"></div></div><div class="ti auto" style="left:18px;top:3.5px"><svg class="a" style="left:0;top:0" width="14" height="14" viewBox="0 0 14 14"><path d="M11.3 6.2 A4.4 4.4 0 1 0 6.6 11.1" stroke="#7c3aed" stroke-width="1.3" fill="none"/><path d="M9.1 6.5 A2.3 2.3 0 1 0 6.5 9" stroke="#7c3aed" stroke-width="1.2" fill="none" opacity="0.85"/><path d="M7.3 7.1 L11.6 8.4 L9.9 9.2 L11.9 11.2 L11.2 11.9 L9.2 9.9 L8.4 11.6 Z" fill="#7c3aed"/></svg></div><div class="tt">Create multiple todo items2</div><div class="ts">@first Create ...</div></div>
<div class="a" style="left:569.5999999999999px;top:40.5px;width:181.3px;height:327px;background:#fff;border-radius:6px;box-shadow:0 2px 8px rgba(0,0,0,.10),0 0 1px rgba(0,0,0,.12)"></div>
<div class="a" style="left:581.5999999999999px;top:53.20px;width:14px;height:14px"><svg width="14" height="14"><path d="M5.08 1.74 A5.6 5.6 0 1 1 1.74 5.08" stroke="#374151" stroke-width="1.35" fill="none"/><circle cx="3.1" cy="3.1" r="0.75" fill="#374151"/><circle cx="7" cy="7" r="3.1" stroke="#374151" stroke-width="1.7" fill="none"/><path d="M6.1 5.4 L8.7 7 L6.1 8.6 Z" fill="#374151"/></svg></div>
<div class="a" style="left:604.3px;top:54.90px;font-size:10.25px;line-height:12px;color:#4b5563;white-space:nowrap">Relaunch Failed on CI</div>
<div class="a" style="left:581.5999999999999px;top:78.87px;width:14px;height:14px"><svg width="14" height="14"><path d="M5.08 1.74 A5.6 5.6 0 1 1 1.74 5.08" stroke="#374151" stroke-width="1.35" fill="none"/><circle cx="3.1" cy="3.1" r="0.75" fill="#374151"/><path d="M5.7 4.5 L9.4 7 L5.7 9.5 Z" fill="#374151"/></svg></div>
<div class="a" style="left:604.3px;top:80.57px;font-size:10.25px;line-height:12px;color:#4b5563;white-space:nowrap">Relaunch All on CI</div>
<div class="a" style="left:581.5999999999999px;top:105.14px;width:14px;height:14px"><svg width="14" height="14"><path d="M1 9.5 C3 5 8 4.5 11 8" stroke="#374151" stroke-width="1.7" fill="none"/><path d="M7.6 8.6 L12.6 9.6 L12.4 4.6Z" fill="#374151"/></svg></div>
<div class="a" style="left:604.3px;top:106.84px;font-size:10.25px;line-height:12px;color:#4b5563;white-space:nowrap">Relaunch Manually</div>
<div class="a" style="left:581.5999999999999px;top:131.41px;width:14px;height:14px"><svg width="14" height="14"><circle cx="7" cy="7" r="5.7" stroke="#374151" stroke-width="1.3" fill="none"/><path d="M5.6 4.3 L9.6 7 L5.6 9.7Z" fill="#374151"/></svg></div>
<div class="a" style="left:604.3px;top:133.11px;font-size:10.25px;line-height:12px;color:#4b5563;white-space:nowrap">Advanced Relaunch</div>
<div class="a" style="left:581.5999999999999px;top:157.68px;width:14px;height:14px"><svg width="14" height="14"><path d="M4.2 3.2 L10.8 7 L4.2 10.8Z" fill="#374151"/></svg></div>
<div class="a" style="left:604.3px;top:159.38px;font-size:10.25px;line-height:12px;color:#4b5563;white-space:nowrap">Launch a Copy Manually</div>
<div class="a" style="left:581.5999999999999px;top:183.95px;width:14px;height:14px"><svg width="14" height="14"><rect x="1.6" y="1.8" width="10.8" height="2.6" fill="#374151"/><path d="M2.3 5.2 H11.7 V12.2 H2.3Z" fill="#374151"/><rect x="5" y="6.3" width="4" height="1.2" fill="#fff"/></svg></div>
<div class="a" style="left:604.3px;top:185.65px;font-size:10.25px;line-height:12px;color:#4b5563;white-space:nowrap">Archive</div>
<div class="a" style="left:581.5999999999999px;top:210.22px;width:14px;height:14px"><svg width="14" height="14"><path d="M3.8 1.2 H10.2 V2.6 H9 V6.4 L10.8 8.4 V9.4 H7.6 V13 H6.4 V9.4 H3.2 V8.4 L5 6.4 V2.6 H3.8Z" fill="#374151"/></svg></div>
<div class="a" style="left:604.3px;top:211.92px;font-size:10.25px;line-height:12px;color:#4b5563;white-space:nowrap">Pin</div>
<div class="a" style="left:581.5999999999999px;top:236.49px;width:14px;height:14px"><svg width="14" height="14"><rect x="1.6" y="1.8" width="10.8" height="10.4" rx="1" fill="#374151"/><text x="7" y="9.3" font-size="4.2" font-weight="bold" fill="#fff" text-anchor="middle" font-family="Liberation Sans">PDF</text></svg></div>
<div class="a" style="left:604.3px;top:238.19px;font-size:10.25px;line-height:12px;color:#4b5563;white-space:nowrap">Export as PDF</div>
<div class="a" style="left:581.5999999999999px;top:262.76px;width:14px;height:14px"><svg width="14" height="14"><path d="M1.5 7 H12 M8 3 L12 7 L8 11" stroke="#374151" stroke-width="1.4" fill="none"/></svg></div>
<div class="a" style="left:604.3px;top:264.46px;font-size:10.25px;line-height:12px;color:#4b5563;white-space:nowrap">Move</div>
<div class="a" style="left:581.5999999999999px;top:289.03px;width:14px;height:14px"><svg width="14" height="14"><path d="M1.5 2.5 V6.6 L7.8 12.8 L12.6 8 L6.4 1.6 H2.4Z" stroke="#374151" stroke-width="1.3" fill="none" stroke-linejoin="round"/><circle cx="4.4" cy="4.5" r="0.9" fill="#374151"/><path d="M6 8 L8.5 5.5 M7.3 9.2 L9.4 7" stroke="#374151" stroke-width="0.8"/></svg></div>
<div class="a" style="left:604.3px;top:290.73px;font-size:10.25px;line-height:12px;color:#4b5563;white-space:nowrap">Labels</div>
<div class="a" style="left:581.5999999999999px;top:315.30px;width:14px;height:14px"><svg width="14" height="14"><path d="M7 2 V12 M2 7 H12" stroke="#374151" stroke-width="1.3"/></svg></div>
<div class="a" style="left:604.3px;top:317.00px;font-size:10.25px;line-height:12px;color:#4b5563;white-space:nowrap">Link to Issue</div>
<div class="a" style="left:581.5999999999999px;top:341.57px;width:14px;height:14px"><svg width="14" height="14"><path d="M2.3 2.6 H11.7 M5 2.6 V1.2 H9 V2.6" stroke="#ef4444" stroke-width="1.3" fill="none"/><path d="M3.6 4.3 H10.4 V11.8 H3.6Z" stroke="#ef4444" stroke-width="1.3" fill="none"/></svg></div>
<div class="a" style="left:604.3px;top:343.27px;font-size:10.25px;line-height:12px;color:#ef4444;white-space:nowrap">Delete</div>
<div class="a" style="left:569.5999999999999px;top:99px;width:181.3px;height:1px;background:#f0f1f3"></div>
<div class="a" style="left:569.5999999999999px;top:283px;width:181.3px;height:1px;background:#f0f1f3"></div>
<div class="a" style="left:569.5999999999999px;top:335.8px;width:181.3px;height:1px;background:#f0f1f3"></div>
<div class="redbox" style="left:718.5999999999999px;top:3px;width:40.2px;height:38.7px"></div>
<div class="badge" style="left:749.5999999999999px;top:29.5px">2</div>
<div class="redbox" style="left:569.5999999999999px;top:43.5px;width:145.6px;height:27.6px"></div>
<div class="badge" style="left:705.75px;top:62.85px">3</div>
</div>
</body></html>
